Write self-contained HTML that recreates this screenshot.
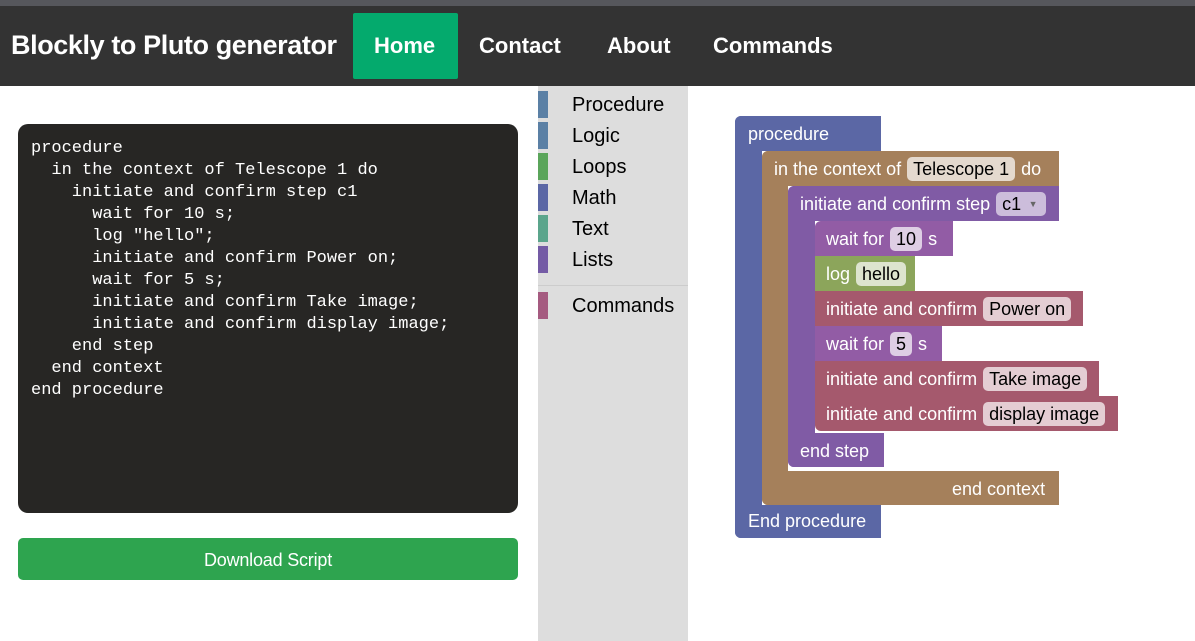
<!DOCTYPE html>
<html><head><meta charset="utf-8"><style>
*{margin:0;padding:0;box-sizing:border-box}
body{width:1195px;height:641px;overflow:hidden;background:#fff;font-family:"Liberation Sans",Arial,sans-serif;position:relative}
.top{position:absolute;left:0;top:0;width:1195px;height:6px;background:#56575c}
.nav{position:absolute;left:0;top:6px;width:1195px;height:80px;background:#333}
.nav .t{position:absolute;left:11px;top:24px;color:#fff;font-weight:bold;font-size:27px;letter-spacing:-0.4px}
.nav .i{position:absolute;top:27px;color:#fff;font-weight:bold;font-size:22px}
.home{position:absolute;left:353px;top:7px;width:105px;height:66px;background:#04aa6d;border-radius:2px}
.code{position:absolute;left:18px;top:124px;width:500px;height:389px;background:#272624;border-radius:10px;color:#fff;font-family:"Liberation Mono","DejaVu Sans Mono",monospace;font-size:17px;line-height:22px;padding:14px 13px;white-space:pre}
.btn{position:absolute;left:18px;top:538px;width:500px;height:42px;background:#2ea44f;border-radius:5px;color:#fff;font-size:18px;text-align:center;line-height:44px;letter-spacing:-0.2px}
.tb{position:absolute;left:538px;top:86px;width:150px;height:555px;background:#ddd}
.tb .r{position:absolute;left:0;height:27px;width:150px}
.tb .r b{position:absolute;left:0;top:0;width:10px;height:27px}
.tb .r span{position:absolute;left:34px;top:3px;font-size:20px;color:#000}
.tb .sep{position:absolute;left:0;top:199px;width:150px;height:1px;background:#ccc}
.b{position:absolute}
.l{position:absolute;white-space:nowrap;color:#fff;font-size:18px;line-height:24px}
.f{display:inline-block;background:rgba(255,255,255,.7);color:#000;border-radius:5px;padding:0 6px;line-height:24px;margin:0 6px}
</style></head><body>
<div class="top"></div>
<div class="nav">
<div class="t">Blockly to Pluto generator</div>
<div class="home"></div>
<div class="i" style="left:374px">Home</div>
<div class="i" style="left:479px">Contact</div>
<div class="i" style="left:607px">About</div>
<div class="i" style="left:713px">Commands</div>
</div>
<div class="code">procedure
  in the context of Telescope 1 do
    initiate and confirm step c1
      wait for 10 s;
      log "hello";
      initiate and confirm Power on;
      wait for 5 s;
      initiate and confirm Take image;
      initiate and confirm display image;
    end step
  end context
end procedure</div>
<div class="btn">Download Script</div>
<div class="tb">
<div class="r" style="top:5px"><b style="background:#5b80a5"></b><span>Procedure</span></div>
<div class="r" style="top:36px"><b style="background:#5b80a5"></b><span>Logic</span></div>
<div class="r" style="top:67px"><b style="background:#5ba55b"></b><span>Loops</span></div>
<div class="r" style="top:98px"><b style="background:#5b67a5"></b><span>Math</span></div>
<div class="r" style="top:129px"><b style="background:#5ba58c"></b><span>Text</span></div>
<div class="r" style="top:160px"><b style="background:#745ba5"></b><span>Lists</span></div>
<div class="sep"></div>
<div class="r" style="top:206px"><b style="background:#a55b80"></b><span>Commands</span></div>
</div>

<!-- procedure -->
<div class="b" style="left:735px;top:116px;width:146px;height:35px;background:#5b67a5;border-radius:6px 0 0 0"></div>
<div class="b" style="left:735px;top:116px;width:27px;height:422px;background:#5b67a5;border-radius:6px 0 0 6px"></div>
<div class="b" style="left:735px;top:505px;width:146px;height:33px;background:#5b67a5;border-radius:0 0 0 6px"></div>
<div class="l" style="left:748px;top:122px">procedure</div>
<div class="l" style="left:748px;top:509px">End procedure</div>
<!-- context -->
<div class="b" style="left:762px;top:151px;width:297px;height:35px;background:#a5805b;border-radius:6px 0 0 0"></div>
<div class="b" style="left:762px;top:151px;width:26px;height:354px;background:#a5805b;border-radius:6px 0 0 6px"></div>
<div class="b" style="left:762px;top:471px;width:297px;height:34px;background:#a5805b;border-radius:0 0 0 6px"></div>
<div class="l" style="left:774px;top:157px">in the context of<span class="f">Telescope 1</span>do</div>
<div class="l" style="left:952px;top:477px">end context</div>
<!-- step -->
<div class="b" style="left:788px;top:186px;width:271px;height:35px;background:#805ba5;border-radius:6px 0 0 0"></div>
<div class="b" style="left:788px;top:186px;width:27px;height:281px;background:#805ba5;border-radius:6px 0 0 6px"></div>
<div class="b" style="left:788px;top:433px;width:96px;height:34px;background:#805ba5;border-radius:0 0 0 6px"></div>
<div class="l" style="left:800px;top:192px">initiate and confirm step<span class="f" style="background:rgba(255,255,255,.6);padding-right:8px">c1 <span style="font-size:9px;color:#666;vertical-align:3px">&nbsp;▼</span></span></div>
<div class="l" style="left:800px;top:439px">end step</div>
<!-- inner -->
<div class="b" style="left:815px;top:221px;width:138px;height:35px;background:#925ca5;border-radius:6px 0 0 0"></div>
<div class="l" style="left:826px;top:227px">wait for<span class="f">10</span>s</div>
<div class="b" style="left:815px;top:256px;width:100px;height:35px;background:#8ca55b"></div>
<div class="l" style="left:826px;top:262px">log<span class="f">hello</span></div>
<div class="b" style="left:815px;top:291px;width:268px;height:35px;background:#a5596d"></div>
<div class="l" style="left:826px;top:297px">initiate and confirm<span class="f">Power on</span></div>
<div class="b" style="left:815px;top:326px;width:127px;height:35px;background:#925ca5"></div>
<div class="l" style="left:826px;top:332px">wait for<span class="f">5</span>s</div>
<div class="b" style="left:815px;top:361px;width:284px;height:35px;background:#a5596d"></div>
<div class="l" style="left:826px;top:367px">initiate and confirm<span class="f">Take image</span></div>
<div class="b" style="left:815px;top:396px;width:303px;height:35px;background:#a5596d;border-radius:0 0 0 6px"></div>
<div class="l" style="left:826px;top:402px">initiate and confirm<span class="f">display image</span></div>
</body></html>
